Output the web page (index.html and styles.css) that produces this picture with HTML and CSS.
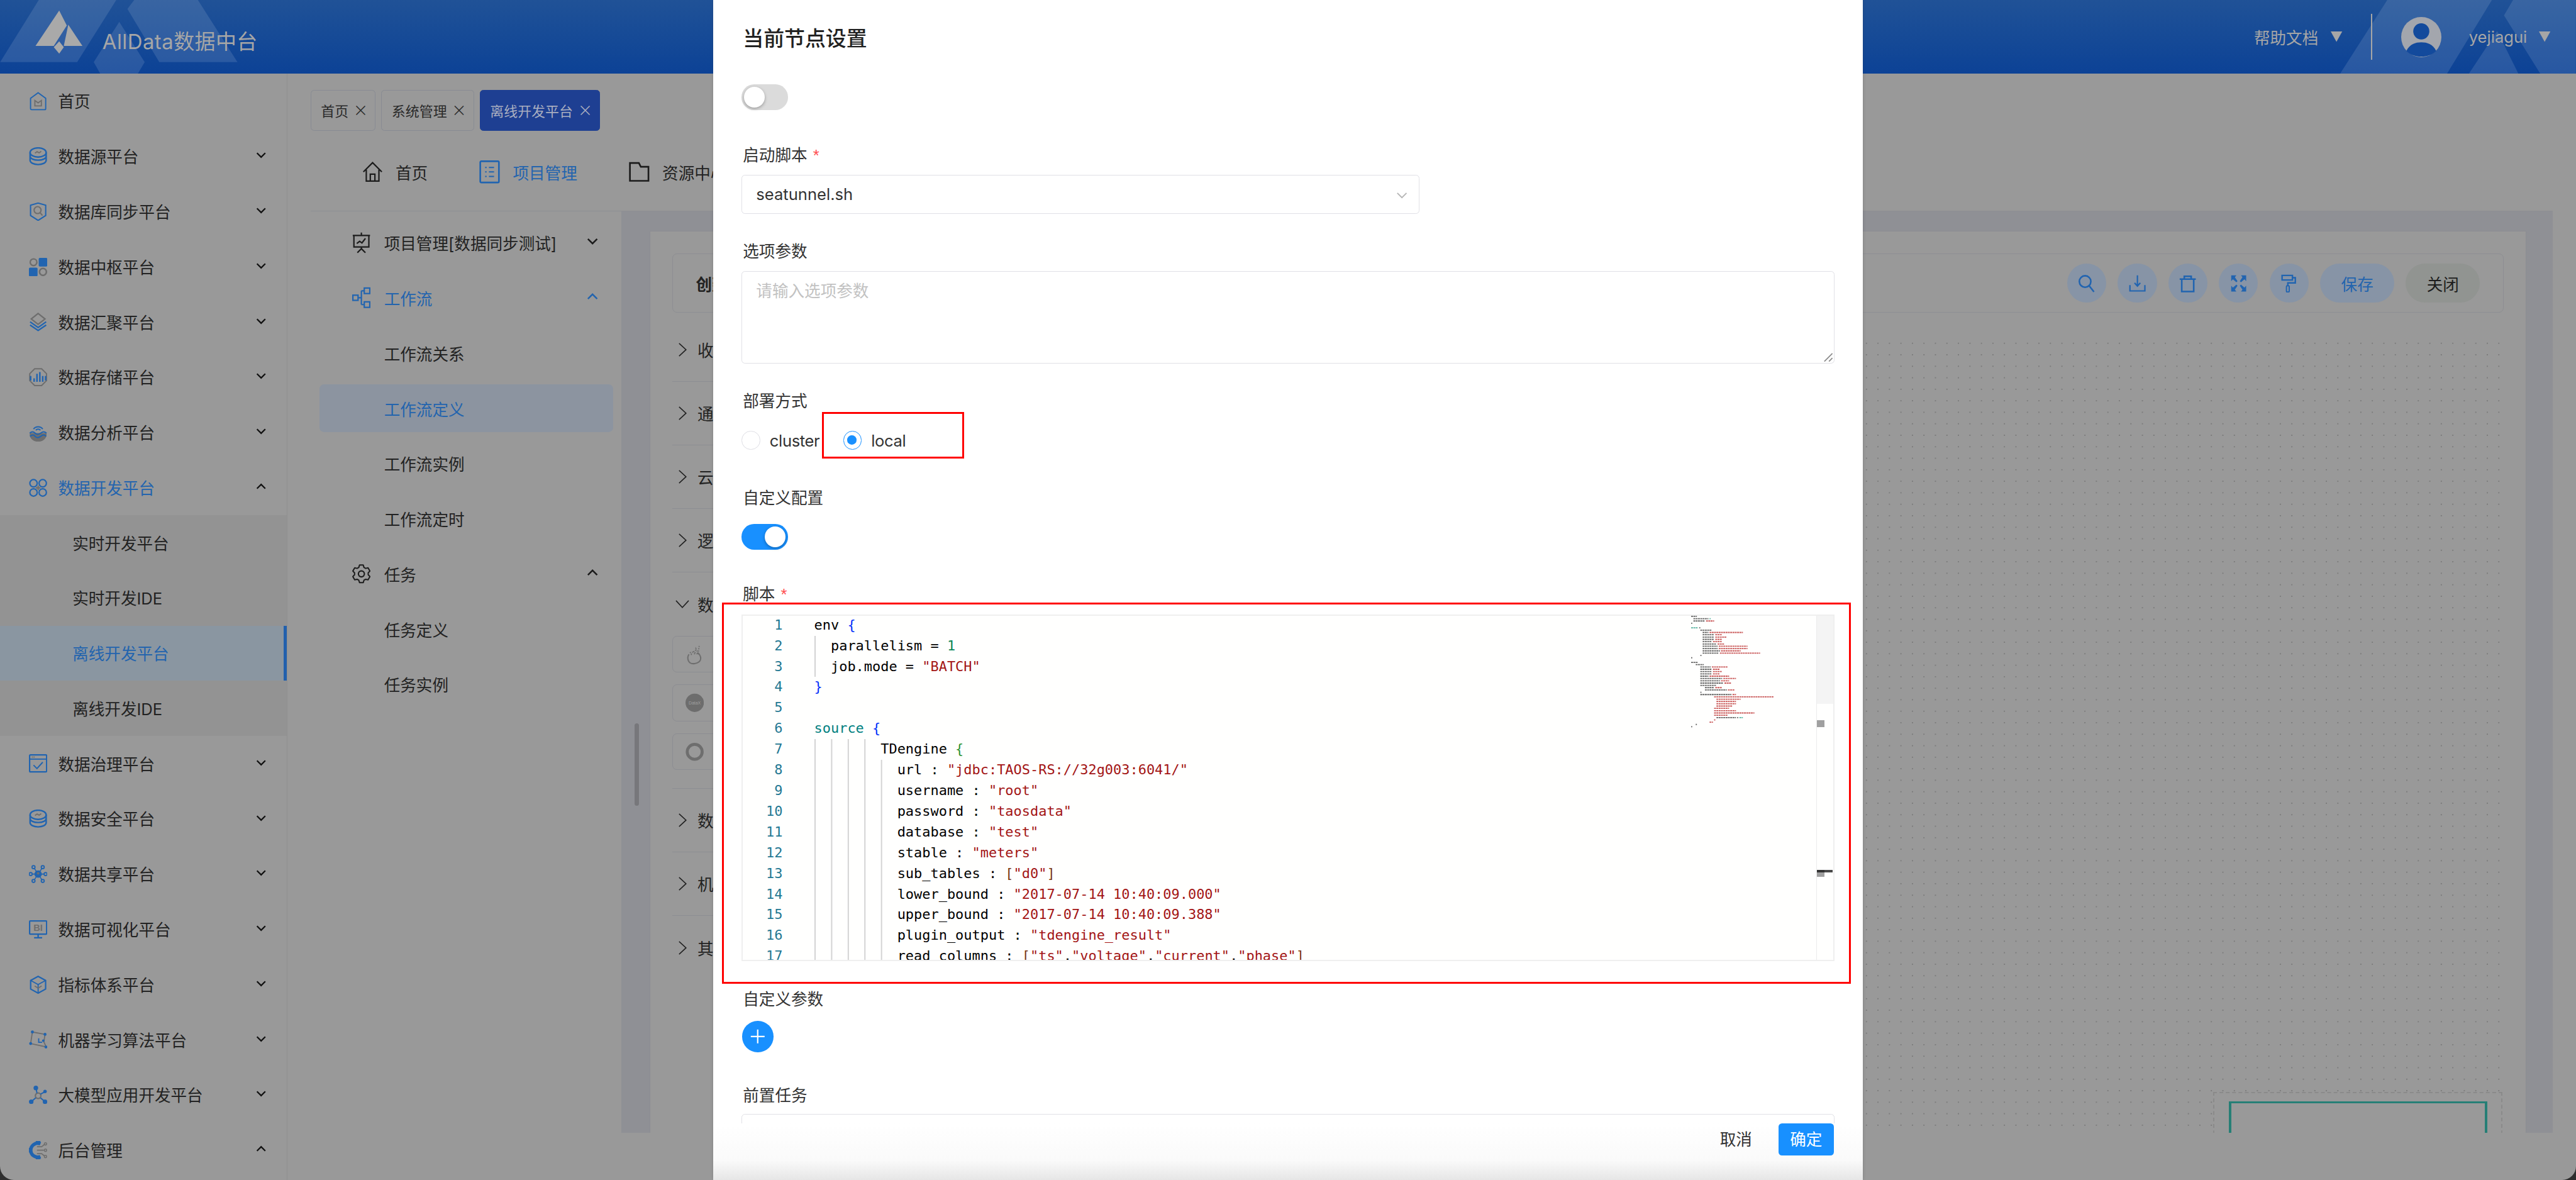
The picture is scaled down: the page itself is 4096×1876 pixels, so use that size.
FILE: index.html
```html
<!DOCTYPE html>
<html lang="zh-CN">
<head>
<meta charset="utf-8">
<title>AllData数据中台</title>
<link rel="stylesheet" href="styles.css">
</head>
<body>
<svg class="defs" aria-hidden="true">
  <symbol id="c-down" viewBox="0 0 10 6"><path d="M1 1l4 4 4-4" fill="none" stroke="currentColor" stroke-width="1.4"/></symbol>
  <symbol id="c-up" viewBox="0 0 10 6"><path d="M1 5l4-4 4 4" fill="none" stroke="currentColor" stroke-width="1.4"/></symbol>
  <symbol id="c-right" viewBox="0 0 8 12"><path d="M1 .5L7 6 1 11.5" fill="none" stroke="currentColor" stroke-width=".9"/></symbol>
  <symbol id="c-bottom" viewBox="0 0 12 8"><path d="M.5 1L6 7l5.5-6" fill="none" stroke="currentColor" stroke-width=".9"/></symbol>
  <symbol id="db" viewBox="0 0 16 16"><g fill="none" stroke="#2164b0" stroke-width="1.3"><ellipse cx="8" cy="4.6" rx="7" ry="4"/><path d="M1 4.6v3.2c0 2 3 3.5 7 3.5s7-1.500 7-3.500V4.600M1 7.800v3.500c0 2.200 3 3.800 7 3.800s7-1.600 7-3.800V7.800"/></g><path d="M5.300 5.200l1.800-1.300 1.800 1 1.800-1.300" fill="none" stroke="#6d6d6d" stroke-width="1"/></symbol>
</svg>
<div class="app">
  <header class="header">
    <svg class="deco" viewBox="0 0 2240 64" aria-hidden="true">
      <g fill="#fff" opacity=".115">
        <path d="M33.600 0H101L67 54H0zM116.600 0H172l34.400 54h-68l-27.700-46.200zM103.600 19l22.100 35-5.900 10H87l-5.600-10z"/>
        <path d="M2076 0h91l-39 64h-93zM2185.400 0H2240v64h-31l-31.500-50.600zM2147 64l24.600-37L2190 64z"/>
      </g>
    </svg>
    <svg class="logo" viewBox="0 0 42 40" aria-hidden="true"><path fill="#a9a9a9" d="M21.400.9L.8 31.700h15.900L28 14zM29.300 13.200l12.300 18.500H25.400zM21.400 27.700l4 5.100-4 5.600-4.700-5.600z"/></svg>
    <div class="brand">AllData数据中台</div>
    <div class="head-right">
      <span class="head-text">帮助文档</span>
      <svg class="tri" viewBox="0 0 10 9" aria-hidden="true"><path d="M0 0h10L5 9z"/></svg>
      <span class="head-div"></span>
      <svg class="avatar" viewBox="0 0 35 35" aria-hidden="true"><circle cx="17.500" cy="17.500" r="17.500" fill="#a3a6ad"/><circle cx="17.500" cy="12.500" r="7" fill="#134a9c"/><path d="M4.500 29.500c3-6 8-7.500 13-7.500s10 1.500 13 7.500c-3 3.300-8 5-13 5s-10-1.700-13-5z" fill="#134a9c"/></svg>
      <span class="head-text head-user">yejiagui</span>
      <svg class="tri tri-user" viewBox="0 0 10 9" aria-hidden="true"><path d="M0 0h10L5 9z"/></svg>
    </div>
  </header>
  <div class="body">
    <aside class="sidebar">
      <div class="nav"><svg class="ico" viewBox="0 0 16 17"><path d="M1 6L8 .8 15 6v9.500a1 1 0 0 1-1 1H2a1 1 0 0 1-1-1z" fill="none" stroke="#2164b0" stroke-width="1.100"/><path d="M5 8v5h6V8l-3 2.200z" fill="none" stroke="#6e6e6e" stroke-width="1.100"/></svg><span>首页</span></div>
      <div class="nav"><svg class="ico"><use href="#db"/></svg><span>数据源平台</span><svg class="chev"><use href="#c-down"/></svg></div>
      <div class="nav"><svg class="ico" viewBox="0 0 16 17"><path d="M1 2.500l7-2 7 2V12l-7 4.500L1 12z" fill="none" stroke="#2164b0" stroke-width="1.200"/><circle cx="7.500" cy="7" r="3.200" fill="none" stroke="#6e6e6e" stroke-width="1.200"/><path d="M10 9.500l2 2.500" stroke="#6e6e6e" stroke-width="1.200"/></svg><span>数据库同步平台</span><svg class="chev"><use href="#c-down"/></svg></div>
      <div class="nav"><svg class="ico" viewBox="0 0 16 16"><circle cx="4" cy="3.800" r="2.900" fill="none" stroke="#6e6e6e" stroke-width="1.300"/><rect x="8.500" y="0" width="7.500" height="7.500" rx="1" fill="#2164b0"/><rect x="0" y="8.500" width="7.500" height="7.500" rx="1" fill="#2164b0"/><circle cx="12.200" cy="12.200" r="3" fill="none" stroke="#6e6e6e" stroke-width="1.400"/></svg><span>数据中枢平台</span><svg class="chev"><use href="#c-down"/></svg></div>
      <div class="nav"><svg class="ico" viewBox="0 0 16 16"><path d="M8 .7l6 4.800-6 4.700-6-4.700z" fill="none" stroke="#6e6e6e" stroke-width="1.200"/><path d="M1 8l7 5 7-5M1 10.800l7 4.700 7-4.700" fill="none" stroke="#2164b0" stroke-width="1.200"/></svg><span>数据汇聚平台</span><svg class="chev"><use href="#c-down"/></svg></div>
      <div class="nav"><svg class="ico" viewBox="0 0 16 16"><path d="M5 .7h6l4.300 4.300v6L11 15.300H5L.7 11V5z" fill="none" stroke="#6e6e6e" stroke-width="1.100"/><path d="M1.500 7v4M4.500 9v3M7 5v7M9.500 3.500V12M12 7v5M14.500 7v4" stroke="#2164b0" stroke-width="1.300"/></svg><span>数据存储平台</span><svg class="chev"><use href="#c-down"/></svg></div>
      <div class="nav"><svg class="ico" viewBox="0 0 16 16"><path d="M4 5a5 5 0 0 1 8 0M6 6a2.700 2.700 0 0 1 4 0" fill="none" stroke="#2164b0" stroke-width="1.100"/><path d="M.7 8.500v1.500a7.300 6 0 0 0 14.600 0V8.500" fill="#6e6e6e"/><path d="M.7 8.500c2-1.500 3-1.500 4.600 0s3 1.500 5 0 3-1.500 5 0M1 11.300c2-1.500 3-1.500 4.300 0s3 1.500 5 0 3-1.500 4.700 0" fill="none" stroke="#2164b0" stroke-width="1.100"/></svg><span>数据分析平台</span><svg class="chev"><use href="#c-down"/></svg></div>
      <div class="nav nav-open"><svg class="ico" viewBox="0 0 16 16"><g fill="none" stroke="#2164b0" stroke-width="1.200"><circle cx="4" cy="4" r="3.200"/><circle cx="12" cy="4" r="3.200"/><circle cx="4" cy="12" r="3.200"/><circle cx="12" cy="12" r="3.200"/></g><path d="M8 6v4M6 8h4" stroke="#6e6e6e" stroke-width="1.100"/></svg><span>数据开发平台</span><svg class="chev"><use href="#c-up"/></svg></div>
      <div class="subnav">
        <div class="sub">实时开发平台</div>
        <div class="sub">实时开发IDE</div>
        <div class="sub sub-on">离线开发平台</div>
        <div class="sub">离线开发IDE</div>
      </div>
      <div class="nav"><svg class="ico" viewBox="0 0 16 16"><rect x=".6" y=".6" width="14.800" height="14.800" rx=".8" fill="none" stroke="#2164b0" stroke-width="1.200"/><path d="M.6 4.300h14.800" stroke="#2164b0"/><path d="M2.500 2.500h3" stroke="#6e6e6e" stroke-width="1" stroke-dasharray="1 .5"/><path d="M4 9.500l3 3 5-5.500" fill="none" stroke="#2164b0" stroke-width="1.100"/></svg><span>数据治理平台</span><svg class="chev"><use href="#c-down"/></svg></div>
      <div class="nav"><svg class="ico"><use href="#db"/></svg><span>数据安全平台</span><svg class="chev"><use href="#c-down"/></svg></div>
      <div class="nav"><svg class="ico" viewBox="0 0 16 16"><path d="M8 8L4 2M8 8l4-6M8 8L4 14M8 8l4 6M8 8H1M8 8h7" stroke="#2164b0" stroke-width=".9"/><circle cx="8" cy="8" r="3.200" fill="#2164b0"/><circle cx="8" cy="7.400" r="1.100" fill="#6e6e6e"/><g fill="#999" stroke="#2164b0" stroke-width="1"><circle cx="4" cy="2" r="1.300"/><circle cx="12" cy="2" r="1.300"/><circle cx="4" cy="14" r="1.300"/><circle cx="12" cy="14" r="1.300"/><circle cx="1.500" cy="8" r="1.300"/><circle cx="14.500" cy="8" r="1.300"/></g></svg><span>数据共享平台</span><svg class="chev"><use href="#c-down"/></svg></div>
      <div class="nav"><svg class="ico" viewBox="0 0 16 16"><rect x=".6" y=".6" width="14.800" height="11.500" rx=".6" fill="none" stroke="#2164b0" stroke-width="1.200"/><path d="M8 12v2.800M4.500 15.300h7" stroke="#2164b0" stroke-width="1.300"/><text class="bi" x="8" y="9.500" text-anchor="middle">BI</text></svg><span>数据可视化平台</span><svg class="chev"><use href="#c-down"/></svg></div>
      <div class="nav"><svg class="ico" viewBox="0 0 16 16"><path d="M8 .7l6.500 3.500v7.500L8 15.300 1.500 11.700V4.200z" fill="none" stroke="#2164b0" stroke-width="1.200"/><path d="M1.500 4.200L8 7.800l6.500-3.600M8 7.800v7.500" fill="none" stroke="#2164b0" stroke-width="1"/><path d="M8 11l3-2M5 9l3 2" stroke="#6e6e6e" stroke-width="1" fill="none"/></svg><span>指标体系平台</span><svg class="chev"><use href="#c-down"/></svg></div>
      <div class="nav"><svg class="ico" viewBox="0 0 16 16"><path d="M3 1.500l11 2-1 6.500 2 4.500-13.500-3z" fill="none" stroke="#6e6e6e" stroke-width="1"/><path d="M8.500 7v3.500h3" fill="none" stroke="#2164b0" stroke-width="1"/><g fill="#2164b0"><circle cx="3" cy="1.500" r="1.300"/><circle cx="14" cy="3.500" r="1.300"/><circle cx="1.500" cy="11.500" r="1.300"/><circle cx="14.800" cy="14.500" r="1.300"/><circle cx="12.500" cy="9" r="1.100"/></g></svg><span>机器学习算法平台</span><svg class="chev"><use href="#c-down"/></svg></div>
      <div class="nav"><svg class="ico" viewBox="0 0 16 16"><circle cx="8" cy="8.800" r="2.400" fill="none" stroke="#6e6e6e" stroke-width="1.200"/><path d="M7 6.500L6.300 3M6 10.500l-3.500 3M10 10.500l3.500 3M10 7.500l3.500-2" stroke="#2164b0" stroke-width="1.100"/><g fill="#2164b0"><circle cx="6" cy="2" r="2"/><circle cx="14" cy="5" r="1.500"/><circle cx="2" cy="14" r="2"/><circle cx="14" cy="14" r="2"/></g></svg><span>大模型应用开发平台</span><svg class="chev"><use href="#c-down"/></svg></div>
      <div class="nav"><svg class="ico" viewBox="0 0 16 16"><path d="M10 2.500A6 6 0 1 0 10 13.500" fill="none" stroke="#2164b0" stroke-width="3"/><path d="M6 .5l4 0M.5 6v4M6 15.500h4" stroke="#2164b0" stroke-width="1.500"/><path d="M7 5h4l2.500-2M7 8h6M7 11h4l2.500 2" fill="none" stroke="#6e6e6e" stroke-width=".9"/><g fill="none" stroke="#6e6e6e" stroke-width=".8"><circle cx="14.400" cy="2.500" r="1"/><circle cx="14.400" cy="8" r="1"/><circle cx="14.400" cy="13.500" r="1"/></g></svg><span>后台管理</span><svg class="chev"><use href="#c-up"/></svg></div>
    </aside>
    <main class="main">
      <div class="tabs">
        <div class="tab">首页<span class="tab-x">×</span></div>
        <div class="tab">系统管理<span class="tab-x">×</span></div>
        <div class="tab tab-on">离线开发平台<span class="tab-x">×</span></div>
      </div>
      <nav class="topnav">
        <div class="top-item"><svg class="top-ico" viewBox="0 0 18 18"><path d="M1 9L9 1l8 8M3.500 7v10h11V7M7 17v-6h4v6" fill="none" stroke="#1c1c1c" stroke-width="1.200"/></svg><span>首页</span></div>
        <div class="top-item top-on"><svg class="top-ico" viewBox="0 0 16 18"><rect x=".7" y=".7" width="14.600" height="16.600" rx=".8" fill="none" stroke="#2164b0" stroke-width="1.300"/><path d="M4.500 5.500h1.200M7.500 5.500h4M4.500 9h1.200M7.500 9h4M4.500 12.500h1.200M7.500 12.500h4" stroke="#2164b0"/></svg><span>项目管理</span></div>
        <div class="top-item"><svg class="top-ico" viewBox="0 0 16 18"><path d="M.7 2h7l1.500 3h6v11H.7z" fill="none" stroke="#1c1c1c" stroke-width="1.300"/></svg><span>资源中心</span></div>
      </nav>
      <div class="work">
        <div class="menu2">
          <div class="m2"><svg class="m2-ico" viewBox="0 0 16 18"><path d="M8 0v2M.5 2.500h15M1.500 2.500v10h13v-10M8 12.500v2M4.500 17.500L8 14l3.500 3.500" fill="none" stroke="#1c1c1c" stroke-width="1.200"/><path d="M4 9.500l2.500-2 2 1.500 3-4" fill="none" stroke="#1c1c1c" stroke-width="1.200"/></svg><span>项目管理[数据同步测试]</span><svg class="m2-chev"><use href="#c-down"/></svg></div>
          <div class="m2 m2-blue"><svg class="m2-ico" viewBox="0 0 16 18"><g fill="none" stroke="#2164b0" stroke-width="1.200"><rect x=".6" y="6.800" width="4.500" height="4.500"/><rect x="10.500" y=".6" width="4.800" height="4.800"/><rect x="10.500" y="12.600" width="4.800" height="4.800"/><path d="M5 9h3M8 3v12M8 3h2.500M8 15h2.500"/></g></svg><span>工作流</span><svg class="m2-chev"><use href="#c-up"/></svg></div>
          <div class="m2 m2-leaf">工作流关系</div>
          <div class="m2 m2-leaf m2-on">工作流定义</div>
          <div class="m2 m2-leaf">工作流实例</div>
          <div class="m2 m2-leaf">工作流定时</div>
          <div class="m2"><svg class="m2-ico" viewBox="0 0 16 18"><circle cx="8" cy="9" r="2.600" fill="none" stroke="#1c1c1c" stroke-width="1.200"/><path d="M9.620 1.370H6.380L5.750 3.440 4.300 4.270 2.200 3.780.58 6.590 2.060 8.170V9.830L.58 11.410 2.200 14.220 4.300 13.730 5.750 14.560 6.380 16.630H9.620L10.250 14.560 11.700 13.730 13.800 14.220 15.420 11.410 13.940 9.830V8.170L15.420 6.590 13.800 3.780 11.700 4.270 10.250 3.440z" fill="none" stroke="#1c1c1c" stroke-width="1.100" stroke-linejoin="round"/></svg><span>任务</span><svg class="m2-chev"><use href="#c-up"/></svg></div>
          <div class="m2 m2-leaf">任务定义</div>
          <div class="m2 m2-leaf">任务实例</div>
        </div>
        <span class="thumb2"></span>
        <div class="content">
          <div class="panel">
            <div class="toolbar">
              <b class="tool-title">创建工作流</b>
              <div class="tool-btns">
                <span class="round"><svg viewBox="0 0 16 16"><circle cx="6.800" cy="6.300" r="5" fill="none" stroke="#2164b0" stroke-width="1.400"/><path d="M10.300 10l4.200 5.300" stroke="#2164b0" stroke-width="1.400"/></svg></span>
                <span class="round"><svg viewBox="0 0 16 16"><path d="M8 1v9M5.500 7.500L8 10.300l2.500-2.800M1.500 9.500V14.500h13V9.500" fill="none" stroke="#2164b0" stroke-width="1.200"/></svg></span>
                <span class="round"><svg viewBox="0 0 16 16"><path d="M1 4.200h14M5 4V1.800h6V4M2.800 4.200V15h10.400V4.200" fill="none" stroke="#2164b0" stroke-width="1.400"/></svg></span>
                <span class="round"><svg viewBox="0 0 16 16"><path fill="#2164b0" d="M1.500 1H6L4.700 2.600 7 6 6 7 3 4.400 1.500 6zM14.500 1H10l1.300 1.600L9 6l1 1 3-2.600L14.500 6zM1.500 15H6l-1.300-1.600L7 10 6 9l-3 2.600L1.500 10zM14.500 15H10l1.300-1.600L9 10l1-1 3 2.600 1.500-1.600z"/></svg></span>
                <span class="round"><svg viewBox="0 0 16 16"><path d="M2 1h9v4H2zM11 3h2.500v4.500H7V10" fill="none" stroke="#2164b0" stroke-width="1.300"/><rect x="5.800" y="10" width="2.400" height="5.500" rx=".8" fill="none" stroke="#2164b0" stroke-width="1.100"/></svg></span>
                <span class="pill pill-blue">保存</span>
                <span class="pill pill-gray">关闭</span>
              </div>
            </div>
            <div class="panel-body">
              <div class="palette">
                <div class="pal-row"><svg class="pal-r"><use href="#c-right"/></svg>收藏组件</div>
                <div class="pal-row"><svg class="pal-r"><use href="#c-right"/></svg>通用组件</div>
                <div class="pal-row"><svg class="pal-r"><use href="#c-right"/></svg>云组件</div>
                <div class="pal-row"><svg class="pal-r"><use href="#c-right"/></svg>逻辑组件</div>
                <div class="pal-group">
                  <div class="pal-head"><svg class="pal-d"><use href="#c-bottom"/></svg>数据集成</div>
                  <div class="pal-box"><svg viewBox="0 0 16 20"><path d="M3 10c-2 3-1 9 5 8s6-5 4-8c-1-2-2-1-2 0" fill="none" stroke="#6e6e6e" stroke-width="1.100"/><path d="M4 8l1 2 2-3 1 3 1-5 2 4 1-7" fill="none" stroke="#6e6e6e" stroke-width="1" stroke-dasharray="1 1"/></svg></div>
                  <div class="pal-box"><svg viewBox="0 0 16 20"><circle cx="8" cy="10" r="8" fill="#6d6d6d"/><text class="datax" x="8" y="11.500" text-anchor="middle">DataX</text></svg></div>
                  <div class="pal-box"><svg viewBox="0 0 16 20"><circle cx="8" cy="10" r="6.500" fill="none" stroke="#6e6e6e" stroke-width="2.600"/></svg></div>
                </div>
                <div class="pal-row"><svg class="pal-r"><use href="#c-right"/></svg>数据质量</div>
                <div class="pal-row"><svg class="pal-r"><use href="#c-right"/></svg>机器学习</div>
                <div class="pal-row pal-last"><svg class="pal-r"><use href="#c-right"/></svg>其他组件</div>
              </div>
              <div class="canvas">
                <div class="mini-frame"><div class="mini-view"></div></div>
              </div>
            </div>
          </div>
        </div>
      </div>
    </main>
  </div>
</div>

<section class="modal">
  <div class="modal-body">
    <h2 class="modal-title">当前节点设置</h2>
    <span class="switch switch-a"><i></i></span>
    <label class="lbl lbl-a">启动脚本<em>*</em></label>
    <div class="select">seatunnel.sh<svg class="select-arrow" viewBox="0 0 10 6"><path d="M1 1l4 4 4-4" fill="none" stroke="#b4b4b4"/></svg></div>
    <label class="lbl lbl-b">选项参数</label>
    <div class="textarea">请输入选项参数<svg class="grip" viewBox="0 0 8 8"><path d="M1 8l7-7M5 8l3-3" stroke="#8c8c8c"/></svg></div>
    <label class="lbl lbl-b">部署方式</label>
    <div class="radios">
      <span class="radio"><i></i>cluster</span>
      <span class="radio radio-on"><i></i>local</span>
    </div>
    <label class="lbl lbl-c">自定义配置</label>
    <span class="switch switch-on"><i></i></span>
    <label class="lbl lbl-d">脚本<em>*</em></label>
    <div class="editor">
      <div class="code">
        <div class="ln"><span class="no">1</span><span class="src">env <b class="br1">{</b></span></div>
        <div class="ln"><span class="no">2</span><span class="src g1">  parallelism = <b class="num">1</b></span></div>
        <div class="ln"><span class="no">3</span><span class="src g1">  job.mode = <b class="str">"BATCH"</b></span></div>
        <div class="ln"><span class="no">4</span><span class="src"><b class="br1">}</b></span></div>
        <div class="ln"><span class="no">5</span><span class="src"></span></div>
        <div class="ln"><span class="no">6</span><span class="src"><b class="kw">source</b> <b class="br1">{</b></span></div>
        <div class="ln"><span class="no">7</span><span class="src g4">        TDengine <b class="br2">{</b></span></div>
        <div class="ln"><span class="no">8</span><span class="src g5">          url : <b class="str">"jdbc:TAOS-RS://32g003:6041/"</b></span></div>
        <div class="ln"><span class="no">9</span><span class="src g5">          username : <b class="str">"root"</b></span></div>
        <div class="ln"><span class="no">10</span><span class="src g5">          password : <b class="str">"taosdata"</b></span></div>
        <div class="ln"><span class="no">11</span><span class="src g5">          database : <b class="str">"test"</b></span></div>
        <div class="ln"><span class="no">12</span><span class="src g5">          stable : <b class="str">"meters"</b></span></div>
        <div class="ln"><span class="no">13</span><span class="src g5">          sub_tables : <b class="br3">[</b><b class="str">"d0"</b><b class="br3">]</b></span></div>
        <div class="ln"><span class="no">14</span><span class="src g5">          lower_bound : <b class="str">"2017-07-14 10:40:09.000"</b></span></div>
        <div class="ln"><span class="no">15</span><span class="src g5">          upper_bound : <b class="str">"2017-07-14 10:40:09.388"</b></span></div>
        <div class="ln"><span class="no">16</span><span class="src g5">          plugin_output : <b class="str">"tdengine_result"</b></span></div>
        <div class="ln"><span class="no">17</span><span class="src g5">          read_columns : <b class="br3">[</b><b class="str">"ts"</b>,<b class="str">"voltage"</b>,<b class="str">"current"</b>,<b class="str">"phase"</b><b class="br3">]</b></span></div>
      </div>
      <svg class="minimap" viewBox="0 0 110 100" aria-hidden="true">
        <path class="mm" stroke="#4a4a4a" d="M0 .5h5M2 2.500h13M2 4.500h10M0 6.500h1M7 10.500h1M8 12.500h10M10 14.500h5M10 16.500h10M10 18.500h10M10 20.500h10M10 22.500h8M10 24.500h12M10 26.500h13M10 28.500h13M10 30.500h15M10 32.500h14M8 34.500h1M0 36.500h1M0 40.500h6M4 42.500h7M8 44.500h9M8 46.500h10M8 48.500h10M8 50.500h10M8 52.500h7M8 54.500h19M8 56.500h17M8 58.500h20M8 60.500h14M12 62.500h8M12 64.500h19M8 66.500h1M8 68.500h27M22 88.500h17M40 88.500h1M4 94.500h1M0 96.500h1"/>
        <path class="mm" stroke="#bf3b3b" d="M13 4.500h7M16 14.500h29M21 16.500h6M21 18.500h10M21 20.500h6M19 22.500h8M23 24.500h6M24 26.500h25M24 28.500h25M26 30.500h17M25 32.500h35M18 44.500h14M19 46.500h6M19 48.500h8M19 50.500h6M16 52.500h17M28 54.500h11M26 56.500h7M29 58.500h6M21 62.500h6M32 64.500h6M36 68.500h3M20 70.500h52M22 72.500h21M22 74.500h17M22 76.500h17M22 78.500h14M20 80.500h13M20 82.500h19M20 84.500h35M20 86.500h12M20 90.500h1M16 92.500h3"/>
        <path class="mm" stroke="#3aa58e" d="M16 2.500h1M0 10.500h6M42 88.500h3"/>
      </svg>
      <div class="scrollbar">
        <span class="sb-thumb"></span>
        <span class="mark mark-a"></span>
        <span class="mark mark-dark"></span>
        <span class="mark mark-dark2"></span>
        <span class="mark mark-b"></span>
      </div>
    </div>
    <label class="lbl lbl-e">自定义参数</label>
    <span class="plus"><svg viewBox="0 0 14 14"><path d="M7 1v12M1 7h12" stroke="#fff" stroke-width="1.200"/></svg></span>
    <label class="lbl lbl-f">前置任务</label>
    <div class="select select-tail"></div>
    <span class="red red-a"></span>
    <span class="red red-b"></span>
  </div>
  <footer class="modal-foot">
    <span class="cancel">取消</span>
    <span class="ok">确定</span>
  </footer>
</section>
</body>
</html>
```
FILE: styles.css
```css
html { zoom: 1.82857; background: #2e2e2e; }
* { box-sizing: border-box; }
body {
  margin: 0;
  width: 2240px;
  height: 1026px;
  position: relative;
  overflow: hidden;
  font-family: Inter, "Noto Sans CJK SC", sans-serif;
  font-size: 14px;
  color: #222;
}
.defs { position: absolute; width: 0; height: 0; }

.app {
  width: 2240px;
  height: 1026px;
  display: flex;
  flex-direction: column;
  background: #999;
  border-radius: 0 0 12px 12px;
  overflow: hidden;
}

/* header */
.header {
  height: 64px;
  flex: none;
  display: flex;
  align-items: center;
  position: relative;
  background: linear-gradient(180deg, #205297 0%, #0c4296 100%);
}
.deco { position: absolute; left: 0; top: 0; width: 2240px; height: 64px; }
.logo { width: 42px; height: 40px; margin-left: 30px; margin-top: -8px; position: relative; }
.brand { margin-left: 17px; font-size: 18px; color: #a6a6a6; position: relative; margin-top: 5px; letter-spacing: .25px; }
.head-right { margin-left: auto; display: flex; align-items: center; padding-right: 22.500px; position: relative; }
.head-text { color: #a6a6a6; font-size: 14px; }
.head-user { margin-left: 24px; }
.tri { width: 10px; height: 9px; fill: #a6a6a6; margin-left: 11px; }
.tri-user { margin-left: 10px; }
.head-div { width: 1px; height: 40px; background: #a6a6a6; margin-left: 25px; }
.avatar { width: 35px; height: 35px; margin-left: 25px; }

/* body */
.body { flex: 1; display: flex; min-height: 0; }
.sidebar { width: 250px; flex: none; border-right: 1px solid #8f8f8f; }
.nav { height: 48px; display: flex; align-items: center; padding-left: 25px; padding-right: 18px; color: #222; }
.nav > span { margin-top: -1px; }
.nav-open { color: #2364ae; }
.ico { width: 16px; height: 16px; margin-right: 9.600px; flex: none; }
.chev { width: 9px; height: 6px; margin-left: auto; color: #111; flex: none; margin-top: -2px; }
.nav-open .chev { color: #111; }
.subnav { background: #939393; }
.sub { height: 48px; display: flex; align-items: center; padding-left: 63px; padding-bottom: 1px; }
.sub-on { background: #8a96a1; color: #2364ae; border-right: 3px solid #2160ad; }
.bi { font: 700 8px "Liberation Sans", sans-serif; fill: #6e6e6e; }

.main { flex: 1; min-width: 0; padding: 14px 20px 0; display: flex; flex-direction: column; }
.tabs { display: flex; gap: 5px; height: 36px; flex: none; }
.tab {
  height: 36px;
  display: flex;
  align-items: center;
  padding: 0 8.500px;
  font-size: 12px;
  color: #2a2a2a;
  border: 1px solid #888b93;
  border-radius: 3px;
}
.tab-x { margin-left: 4.500px; font-size: 19px; line-height: 14px; margin-top: -3px; font-weight: 200; width: 10px; text-align: center; }
.tab-on { background: #1e3f92; border-color: #1e3f92; color: #a9aec0; }

.topnav { height: 70px; flex: none; display: flex; align-items: center; padding-left: 45px; gap: 45px; border-bottom: 1px solid #8d8f93; padding-top: 2px; }
.top-item { display: flex; align-items: center; color: #222; }
.top-on { color: #2364ae; }
.top-ico { width: 18px; height: 20px; margin-right: 11px; }

.work { height: 801px; flex: none; display: flex; position: relative; }
.menu2 { width: 271px; flex: none; padding-top: 3px; border-right: 1px solid #8e9095; display: flex; flex-direction: column; }
.m2 { height: 42px; flex: none; margin: 3px 7px 3px 8px; padding: 0 13px 0 28px; display: flex; align-items: center; border-radius: 4px; }
.m2-ico { width: 16px; height: 20px; margin-right: 12px; flex: none; }
.m2-chev { width: 10px; height: 6px; margin-left: auto; color: #1c1c1c; flex: none; margin-top: -2px; }
.m2-blue { color: #2364ae; }
.m2-blue .m2-chev { color: #2364ae; }
.m2-leaf { padding-left: 56px; }
.m2-on { background: #8c94a0; color: #2364ae; }
.thumb2 { position: absolute; left: 282px; top: 445px; width: 3.500px; height: 71.500px; border-radius: 2px; background: #77777b; }

.content { flex: 1; min-width: 0; background: #8f9095; padding: 16.500px 23px 0 24px; display: flex; }
.panel {
  flex: 1;
  min-width: 0;
  background: #999;
  border: 1px solid #8c8d92;
  border-bottom: 0;
  padding: 19.500px 19.400px 0 19px;
  overflow: hidden;
  display: flex;
  flex-direction: column;
}
.toolbar {
  height: 51.500px;
  flex: none;
  border: 1px solid #8d8e93;
  border-radius: 4px;
  display: flex;
  align-items: center;
  padding: 0 20px;
}
.tool-title { font-weight: 600; font-size: 14px; }
.tool-btns { margin-left: auto; display: flex; gap: 10px; }
.round { width: 34px; height: 34px; border-radius: 50%; background: #8794a6; display: flex; align-items: center; justify-content: center; }
.round svg { width: 16px; height: 16px; }
.pill { width: 64.500px; height: 34px; border-radius: 17px; display: flex; align-items: center; justify-content: center; }
.pill-blue { background: #8794a6; color: #2364ae; }
.pill-gray { background: #919491; color: #1c1c1c; }

.panel-body { flex: 1; display: flex; min-height: 0; }
.palette { width: 260px; flex: none; padding-top: 4.500px; }
.pal-row { height: 55.300px; display: flex; align-items: center; border-bottom: 1px solid #8c8d92; padding-left: 5px; }
.pal-last { border-bottom: 0; }
.pal-r { width: 8px; height: 12px; color: #222; margin-right: 9px; flex: none; }
.pal-d { width: 12px; height: 8px; color: #222; margin-right: 7px; flex: none; }
.pal-group { height: 188px; border-bottom: 1px solid #8c8d92; }
.pal-head { height: 55px; display: flex; align-items: center; padding-left: 3px; }
.pal-box { height: 32px; margin-bottom: 10.500px; border: 1px solid #8c8d92; border-radius: 4px; padding-left: 11px; display: flex; align-items: center; }
.pal-box svg { width: 16px; height: 20px; }
.datax { font: 3.800px "Liberation Sans", sans-serif; fill: #a0a0a0; }
.canvas {
  flex: 1;
  margin-top: 20.500px;
  position: relative;
  background-image:
    linear-gradient(to bottom, #999 0, #999 9px, transparent 9px),
    linear-gradient(to right, #7c7c7c 0, #7c7c7c 1px, transparent 1px);
  background-size: 10px 10px, 10px 10px;
  background-position: 0 -3.600px, 8.300px 0;
}
.mini-frame { position: absolute; left: 1080px; top: 657px; width: 251.700px; height: 120px; border: 1.500px dashed #8a8a8a; background: #999; }
.mini-view { position: absolute; left: 12.500px; top: 7px; width: 224.700px; height: 110px; border: 2px solid #267f76; border-left-width: 2.500px; border-right-width: 2.500px; }

/* modal */
.modal {
  position: absolute;
  left: 620px;
  top: 0;
  width: 1000px;
  height: 1026px;
  background: #fff;
  display: flex;
  flex-direction: column;
  border-radius: 0 0 2px 2px;
  box-shadow: 0 0 3px rgba(60, 60, 60, .25);
}
.modal-body {
  height: 976.600px;
  flex: none;
  overflow: hidden;
  padding: 0 25px;
  position: relative;
  display: flex;
  flex-direction: column;
  align-items: flex-start;
}
.modal-title { margin: 22px 0 0; font-size: 18px; line-height: 24px; font-weight: 500; color: #222; padding-left: 1px; }
.lbl { height: 20px; line-height: 20px; margin-bottom: 7px; padding-left: 1px; color: #333; flex: none; }
.lbl em { font-style: normal; color: #ff4d4f; margin-left: 5px; font-family: "Liberation Sans", sans-serif; }
.lbl-a { margin-top: 30px; margin-bottom: 6.400px; }
.lbl-b { margin-top: 23px; }
.lbl-c { margin-top: 29.300px; margin-bottom: 12.700px; }
.lbl-d { margin-top: 29.400px; margin-bottom: 6.900px; }
.lbl-e { margin-top: 23.800px; margin-bottom: 8.400px; }
.lbl-f { margin-top: 28px; margin-bottom: 6px; }

.switch { width: 40px; height: 22px; border-radius: 11px; background: #dbdbdb; position: relative; flex: none; display: block; }
.switch-a { margin-top: 27.500px; }
.switch i { position: absolute; left: 2px; top: 2px; width: 18px; height: 18px; border-radius: 50%; background: #fff; box-shadow: 0 1px 3px rgba(0, 0, 0, .3); }
.switch-on { background: #1890ff; }
.switch-on i { left: 20px; }

.select {
  width: 589.500px;
  height: 34px;
  flex: none;
  position: relative;
  border: 1px solid #e0e0e6;
  border-radius: 3px;
  padding-left: 12px;
  display: flex;
  align-items: center;
  color: #333;
}
.select-arrow { position: absolute; right: 10px; top: 14.500px; width: 10px; height: 6px; }
.select-tail { width: 950px; }
.textarea {
  width: 950px;
  height: 80px;
  flex: none;
  position: relative;
  border: 1px solid #e0e0e6;
  border-radius: 3px;
  padding: 7px 12px;
  line-height: 20px;
  color: #c2c2c2;
}
.grip { position: absolute; right: 1px; bottom: 1px; width: 8px; height: 8px; }
.radios { height: 22px; flex: none; margin-top: 6px; display: flex; align-items: center; color: #333; }
.radio { display: flex; align-items: center; letter-spacing: -.2px; }
.radio i { width: 16px; height: 16px; border-radius: 50%; border: 1px solid #dedee4; margin-right: 8.300px; position: relative; flex: none; }
.radio-on { margin-left: 20.500px; }
.radio-on i { border-color: #1890ff; }
.radio-on i::after { content: ""; position: absolute; left: 3px; top: 3px; width: 8px; height: 8px; border-radius: 50%; background: #1890ff; }

.editor {
  width: 950px;
  height: 301.500px;
  flex: none;
  position: relative;
  overflow: hidden;
  border: 1.500px solid #efefef;
  background: #fffffe;
  font-family: "DejaVu Sans Mono", monospace;
  font-size: 12px;
  line-height: 18px;
  color: #000;
}
.code { margin-top: -.500px; }
.ln { height: 18px; display: flex; }
.no { width: 34.500px; text-align: right; color: #237893; flex: none; }
.src { margin-left: 27.400px; position: relative; white-space: pre; flex: 1; }
.src b { font-weight: 400; }
.br1 { color: #0431fa; }
.br2 { color: #319331; }
.br3 { color: #7b3814; }
.num { color: #098658; }
.str { color: #a31515; }
.kw { color: #008080; }
.g1::before, .g4::before, .g5::before {
  content: "";
  position: absolute;
  left: 0;
  top: 0;
  bottom: 0;
  background: linear-gradient(to right, #d3d3d3 0, #d3d3d3 1px, transparent 1px) 0 0 / 14.450px 100% repeat-x;
}
.g1::before { width: 14.450px; }
.g4::before { width: 57.800px; }
.g5::before { width: 72.250px; }
.minimap { position: absolute; left: 824.300px; top: 0; width: 110px; height: 100px; }
.mm { fill: none; stroke-width: 1; stroke-dasharray: 1.600 .4; opacity: .85; }
.scrollbar { position: absolute; right: 0; top: 0; bottom: 0; width: 14.500px; border-left: 1px solid #ececec; background: #fffffe; }
.sb-thumb { position: absolute; left: 0; top: 0; right: 0; height: 77px; background: #f4f4f4; }
.mark { position: absolute; left: 0; width: 6.500px; }
.mark-a { top: 91px; height: 6px; background: #a0a0a0; }
.mark-b { top: 223.200px; height: 3.800px; background: #a0a0a0; }
.mark-dark { top: 221.200px; height: 2px; background: #333; }
.mark-dark2 { top: 221.200px; height: 2px; left: 6.500px; width: 7px; background: #4a4a4a; }
.plus { width: 27px; height: 27px; border-radius: 50%; background: #1890ff; display: flex; align-items: center; justify-content: center; flex: none; margin-left: .5px; }
.plus svg { width: 14px; height: 14px; }
.red { position: absolute; border: 2px solid #f00; }
.red-a { left: 94.500px; top: 358px; width: 124px; height: 40.500px; }
.red-b { left: 8px; top: 524px; width: 981.500px; height: 331.500px; }

.modal-foot {
  flex: 1;
  display: flex;
  align-items: flex-start;
  justify-content: flex-end;
  gap: 23px;
  padding-right: 25.500px;
  background: linear-gradient(180deg, #fff 0, #fafafa 65%, #e6e6e6 100%);
}
.cancel { height: 28px; line-height: 28px; color: #333; }
.ok { width: 48px; height: 28px; line-height: 28px; text-align: center; background: #1890ff; color: #fff; border-radius: 3px; }
```
